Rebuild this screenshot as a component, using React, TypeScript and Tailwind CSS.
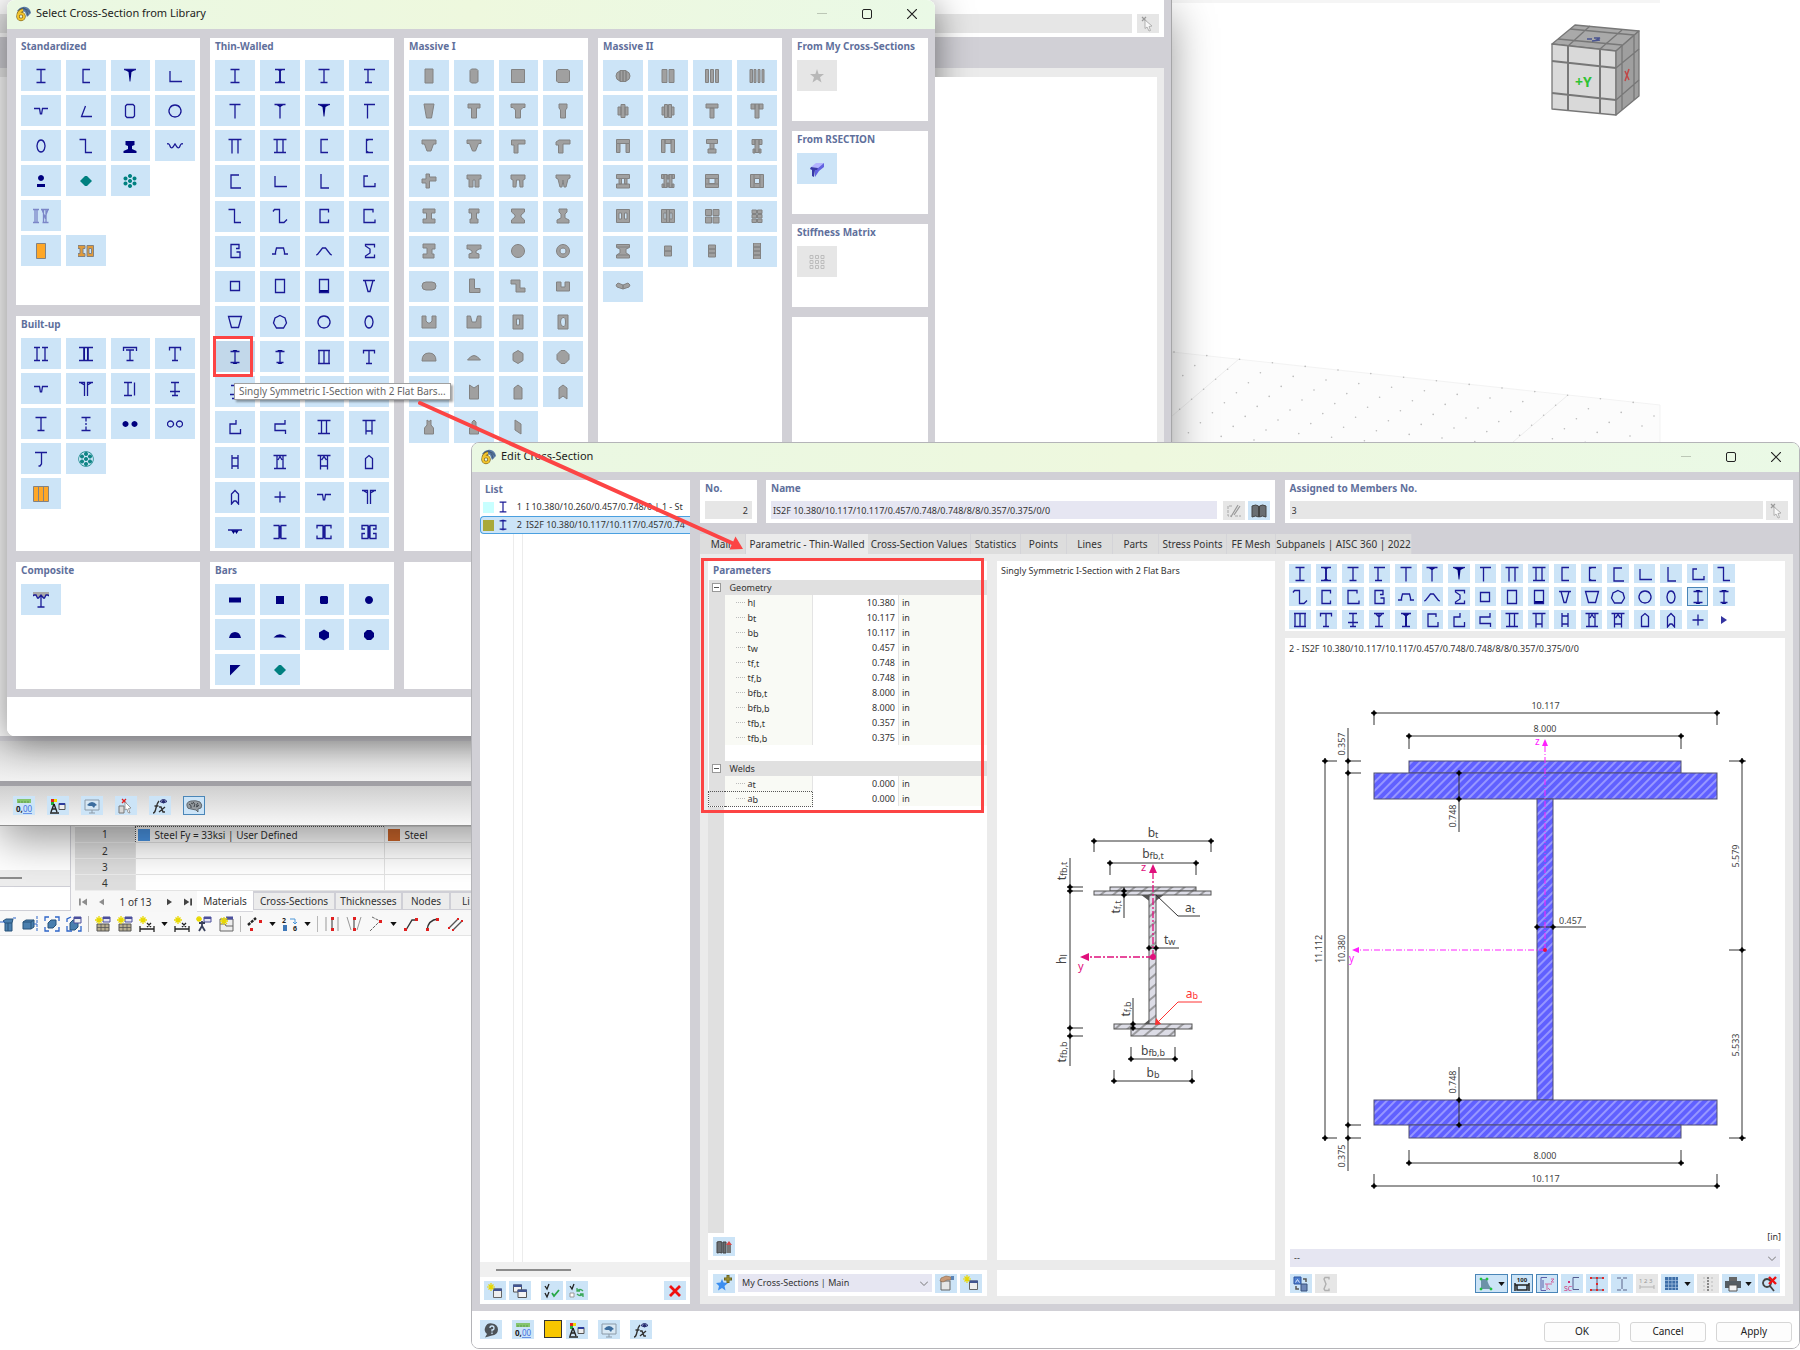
import React from "react";

type Glyph = { s?: string; f?: string; color?: string };

// Thin-walled section glyphs, drawn on a 16x16 box. s = stroked, f = filled.
const T: Record<string, Glyph> = {
	i: { s: "M3.5 1.5h9M3.5 14.5h9M8 1.5v13" },
	iTaper: { s: "M3 1.5h10M3 14.5h10M8 1.5v13", f: "M5 1.5h6L8.8 3v10l2.2 1.5H5L7.2 13V3z" },
	iUnsym: { s: "M2.5 1.5h11M4.5 14.5h7M8 1.5v13" },
	iOffset: { s: "M3 1.5h11M4 14.5h7M7 1.5v13" },
	t: { s: "M2.5 1.5h11M8 1.5v14" },
	tTaper: { s: "M2.5 1.5h11M8 1.5v14", f: "M4 1.5h8L8.5 4h-1z" },
	tThick: { s: "M2 1.5h12", f: "M2 1.5h12L9.5 4 8.4 13.5h-.8L6.5 4z" },
	tOffset: { s: "M3 1.5h11M6.5 1.5v14" },
	pi: { s: "M1.5 1.5h13M5 1.5v14M11 1.5v14" },
	ii: { s: "M1.5 1.5h13M5 1.5v13M11 1.5v13M2 14.5h12" },
	c: { s: "M12 1.5H5v13h7" },
	cTaper: { s: "M12 1.5H5.5v13H12", f: "M5 1.5h4L6 3v10l3 1.5H5z" },
	cUnsym: { s: "M12 2H4v13h10" },
	l: { s: "M3 3v10.5h12" },
	lTall: { s: "M5 1v14h8" },
	lLip: { s: "M7 3H3v10.5h11V10" },
	z: { s: "M1.5 1.5h6v13h6.5" },
	zLip: { s: "M1 3.5l1.5-2h5v13h4.5l3-3" },
	cLip: { s: "M12.5 4.5v-3H4v13h8.5v-3" },
	cLip2: { s: "M12 4.5v-3H3v13h11v-3" },
	beta: { s: "M9 5.5h3v-4H4v13h9V9H9.5" },
	hat: { s: "M0 11h3.5V9l1-4h7l1 4v2H16" },
	curve: { s: "M0 12l1.5-.5L6.5 5h3l5 6.5 1.5.5" },
	sigma: { s: "M13.5 4.5v-3H4.5V3L9 6v4l-4.5 3v1.5h9v-3" },
	sq: { s: "M3.5 3.5h9v9h-9z" },
	box: { s: "M3.5 1.5h9v13h-9z" },
	boxThick: { s: "M3.5 1.5h9v13h-9z", f: "M3.5 12h9v3h-9z" },
	vee: { s: "M2 2.5h12M4 2.5l3 11h2l3-11" },
	trap: { s: "M1.5 2.5h13l-3 11h-7z" },
	hept: { s: "M8 1.5L13 4l1.5 5-3 5h-7l-3-5L3 4z" },
	circ: { s: "M8 2a6 6 0 1 0 .01 0z" },
	ell: { s: "M8 2a4 6 0 1 0 .01 0z" },
	bars: { s: "M3.5 2.5h9M3.5 13.5h9M8 2v12", f: "M5 2.5L6.5 1h3L11 2.5zM5 13.5L6.5 15h3l1.5-1.5z" },
	bars2: { s: "M3.5 2.5h9M4.5 13.5h7M8 2v12", f: "M4.5 3L6 1h4l1.5 2zM5 13l1.5 2h3l1.5-2z" },
	boxI: { s: "M2 1.5h12M2 14.5h12M8 1.5v13M3 1.5v13M13 1.5v13" },
	tLip: { s: "M2.5 4.5v-3h11v3M8 1.5v13M5 14.5h6" },
	dbl: { s: "M4 1.5h8M8 1.5v13M3 10.5h10M5 14.5h6" },
	yI: { s: "M3 1.5h10M4 14.5h8M8 1.5v13M5 2l3 3 3-3" },
	yIThick: { s: "M3 1.5h10M4 14.5h8M8 1.5v13", f: "M4 1.5h8L9 4v10H7V4z" },
	g: { s: "M12 5V2H4v12.5h10V10" },
	gUp: { s: "M9 1v4H3v9.5h10.5V10" },
	s: { s: "M13 1v4H3v6.5h10.5V15" },
	iiTop: { s: "M1.5 1.5h13M5.5 1.5v13M10.5 1.5v13M2 14.5h12" },
	piTop: { s: "M1.5 1.5h13M5 1.5v14M11 1.5v14M5 12h6" },
	hash: { s: "M5 1v14M11 1v14M5 4h6M5 12h6" },
	ladder: { s: "M1.5 1.5h13M2 14.5h12M5 1.5v13M11 1.5v13M6 6l2-3.5L10 6" },
	ladder2: { s: "M1.5 1.5h13M4.5 1.5v14M11.5 1.5v14M5.5 6L8 2.5 10.5 6M4.5 12h7" },
	house: { s: "M4.5 14.5v-10L8 1.5l3.5 3v10z" },
	house2: { s: "M4.5 15V5L8 1.5 11.5 5v10L9 12H7z" },
	plus: { s: "M2.5 8h11M8 2.5v11" },
	wing: { s: "M1 5.5h5.5l1 6M15 5.5H9.5l-1 6" },
	wingTall: { s: "M1 1.5h5.5V15M15 1.5H9.5V15M3 2l3.5 2M13 2L9.5 4" },
	wingLow: { s: "M1 6h14", f: "M4 6h8L9.5 10 8 7.5 6.5 10z" },
	cc: { s: "M1.5 1.5H7v13H1.5M14.5 1.5H9v13h5.5M8 2v12" },
	ccLip: { s: "M1 4.5v-3h6v13H1v-3M15 4.5v-3H9v13h6v-3M8 2v12" },
	ccBeta: { s: "M4 5H1V1.5h6v13H1V9.5h3M12 5h3V1.5H9v13h6V9.5h-3M8 2v12" },
	thick4: { f: "M4 4h8v8H4z" },
	angleS: { s: "M7.5 3L3.5 13.5H14" },
	boxR: { s: "M5 1.5h6L12.5 3v10L11 14.5H5L3.5 13V3z" },
	rail: { f: "M3.5 3h9v4L10 8v3l4.5 2v2h-13v-2L6 11V8L3.5 7z" },
	wave: { s: "M0 6q2-1 3 2t3 1l2-3 2 3q2 2 3-1t3-2" },
	person: { f: "M8 2a3 3 0 1 0 .01 0zM4 11h8v3H4z" },
	roundTeal: { f: "M2 8l3-3 2-2h2l2 2 3 3-3 3-2 2H7l-2-2z", color: "#008080" },
	flower: {
		f: "M8 6a2 2 0 1 0 .01 0zM8 1a2 2 0 1 0 .01 0zM8 11a2 2 0 1 0 .01 0zM3.5 3.5a2 2 0 1 0 .01 0zM12.5 3.5a2 2 0 1 0 .01 0zM3.5 8.5a2 2 0 1 0 .01 0zM12.5 8.5a2 2 0 1 0 .01 0z",
		color: "#008080",
	},
	mixed: { s: "M0 1.5h6M0 14.5h6M2 1.5v13M4 1.5v13M8 1.5h8M9 1.5l3 8 3-8M10.5 1.5v13M13 1.5v13M9.5 14.5h6", color: "#7b86c8" },
	cap: { s: "M1.5 5V1.5h13V5M4 4h8M8 4v11M4.5 14.5h7" },
	iiWide: { s: "M1 1.5h6M1 14.5h6M4 1.5v13M9 1.5h6M9 14.5h6M12 1.5v13" },
	iiClose: { s: "M1 1.5h14M1 14.5h14M6 1.5v13M10 1.5v13", f: "M5.5 1.5H7v13H5.5zM9 1.5h1.5v13H9z" },
	iBar: { s: "M2 1.5h8M2 14.5h8M6 1.5v13M12.5 1.5v13" },
	iGap: { s: "M3.5 1.5h9M3.5 14.5h9M8 1.5v4M8 7v2M8 10.5v4" },
	dots: { f: "M3.5 5a3 3 0 1 0 .01 0zM12.5 5a3 3 0 1 0 .01 0z" },
	rings: { s: "M3.5 5a3 3 0 1 0 .01 0zM12.5 5a3 3 0 1 0 .01 0z" },
	tHook: { s: "M2 1.5h12M8.5 1.5V13L7 15H5.5" },
	comp: { s: "M0 4l1-1h2l1.5 3h1L8 3l2.5 3h1L13 3h2l1 1M8 3v12M4.5 15h7" },
	flat: { f: "M2 5.5h12v5H2z" },
	sqR: { f: "M5 4h6l1 1v6l-1 1H5l-1-1V5z" },
	dot: { f: "M8 4a4 4 0 1 0 .01 0z" },
	half: { f: "M2 11Q3 5 8 5t6 6z" },
	seg: { f: "M1.5 10.5Q8 4 14.5 10.5z" },
	hex: { f: "M8 2.5l5 3v5l-5 3-5-3v-5z" },
	oct: { f: "M6 3h4l3 3v4l-3 3H6l-3-3V6z" },
	tri: { f: "M3 3h10.5L3 13.5z" },
	cable: {
		f: "M8 6a2 2 0 1 0 .01 0zM8 1a2 2 0 1 0 .01 0zM8 11a2 2 0 1 0 .01 0zM4 3.5a2 2 0 1 0 .01 0zM12 3.5a2 2 0 1 0 .01 0zM4 8.5a2 2 0 1 0 .01 0zM12 8.5a2 2 0 1 0 .01 0zM8 .3a7.7 7.7 0 1 0 .01 0zM8 1a7 7 0 1 1-.01 0z",
		color: "#108585",
	},
};

const STANDARDIZED = "i,c,tThick,l,wing,angleS,boxR,circ,ell,z,rail,wave,person,roundTeal,flower,,mixed,,,".split(",");
const BUILT_UP = "iiWide,iiClose,cap,tLip,wing,wingTall,iBar,dbl,iUnsym,iGap,dots,rings,tHook,cable".split(",");
const BARS = "flat,thick4,sqR,dot,half,seg,hex,oct,tri,roundTeal".split(",");
const THIN =
	"i,iTaper,iUnsym,iOffset,t,tTaper,tThick,tOffset,pi,ii,c,cTaper,cUnsym,l,lTall,lLip,z,zLip,cLip,cLip2,beta,hat,curve,sigma,sq,box,boxThick,vee,trap,hept,circ,ell,bars,bars2,boxI,tLip,dbl,yI,yIThick,g,gUp,s,iiTop,piTop,hash,ladder,ladder2,house,house2,plus,wing,wingTall,wingLow,cc,ccLip,ccBeta".split(
		",",
	);
const PALETTE = THIN.slice(0, 50);

const MASSIVE_1 = [
	"M4 1h8v14H4z", "M5.5 1h5L12 2.5v11L10.5 15h-5L4 13.5v-11z", "M1.5 1.5h13v13h-13z", "M3 1.5h10L14.5 3v10L13 14.5H3L1.5 13V3z",
	"M3 1h10l-2.5 14h-5z", "M2 1h12v4h-3.5v10h-5V5H2z", "M1 1h14v3.5h-2L10.5 7v8h-5V7L3 4.5H1z", "M4 1h8v4l-1.5 2v8h-5V7L4 5z",
	"M1 2h14v4h-2.5L10 13H6L3.5 6H1z", "M1 2h14v3.5h-2.5L9.5 13h-3L3.5 5.5H1z", "M1.5 2H15v4H8v9H4V7H1.5z", "M1 4l3-2h11v4H8v9H3.5V7H1z",
	"M5 1h3.5v3H15v4H8.5v7H5v-5H1V6h4z", "M1 2h14v4h-2v8H9V7H7v7H3V6H1z", "M1 2h14v4l-2 1v7h-3L9.5 7h-3L6 14H3V7L1 6z", "M1 2h14v3l-2 1-2 8H9L8 7l-1 7H5L3 6 1 5z",
	"M2 1h12v4h-3.5v6H14v4H2v-4h3.5V5H2z", "M3 1h10v4h-2.5v6H12v4H4v-4h1.5V5H3z", "M1.5 1h13v3L11 7v2l3.5 3v3h-13v-3L5 9V7L1.5 4z", "M4 1h8v3l-2 2v4l4 2v3H2v-3l4-2V6L4 4z",
	"M2 1h12v5h-3v5h2v4H2v-4h4V5H2z", "M1 2h14v4h-2l-3 2v2l3 1v4H3v-4l3-1V8L3 6H1z", "M8 1.5a6.5 6.5 0 1 0 .01 0z", "M8 1.5a6.5 6.5 0 1 0 .01 0zM8 5a3 3 0 1 0 .01 0z",
	"M5 4h6q4 0 4 4t-4 4H5q-4 0-4-4t4-4z", "M3.5 1h5v9.5H14v4H3.5z", "M1 2h9v8h5v4H6V6H1z", "M1.5 4H6v5h4V4h4.5v9h-13z",
	"M1 2h4v5l2 2h2l2-2V2h4v12H1z", "M1 2h3.5L6 8h4l1.5-6H15v12H1z", "M3 1h10v14H3zM6.5 5v6h3V5z", "M3 1h10v14H3zM8 3.5Q5.5 4 5.5 8T8 12.5 10.5 8 8 3.5z",
	"M1 12Q1 4 8 4t7 8z", "M1.5 11Q8 2 14.5 11z", "M8 1.5l5 3v7l-5 3-5-3v-7z", "M6 1.5h4l4 4v5l-4 4H6l-4-4v-5z",
	"M4 1h8v14H4z", "M3.5 1L8 4l4.5-3v14h-9z", "M4 4l4-3 4 3v11H4z", "M4 4l4-3 4 3v11l-4-3-4 3z",
	"M6 1l2 1.5L10 1v5l2.5 3v6h-9V9L6 6z", "M6 3l2-2 2 2v4l2.5 2v6h-9V9L6 7z", "M5 1l6 4v10l-6-4z",
];

const MASSIVE_2 = [
	"M5 3Q1 4 1 8t4 5zM5 2.5h3v11H5zM8 2.5h3v11H8zM11 3q4 1 4 5t-4 5z", "M2 1.5h5v13H2zM9 1.5h5v13H9z", "M1.5 1.5h3v13h-3zM6.5 1.5h3v13h-3zM11.5 1.5h3v13h-3z", "M1 1.5h2.5v13H1zM5 1.5h2v13H5zM9 1.5h2v13H9zM13 1.5h2v13h-2z",
	"M6 1.5h4v13H6zM3 4h3v8H3zM10 4h3v8h-3z", "M4.5 1.5h3v13h-3zM8.5 1.5h3v13h-3zM2 4h2.5v8H2zM11.5 4H14v8h-2.5z", "M2 1h12v4H2zM6 5h4v10H6z", "M6 1h4v14H6zM2 1h4v5H2zM10 1h4v5h-4z",
	"M1.5 1.5h13v4h-13zM1.5 5.5H5v9H1.5zM11 5.5h3.5v9H11z", "M1.5 1.5H5v13H1.5zM11 1.5h3.5v13H11zM5 1.5h6v4H5z", "M2.5 1.5h11v4h-11zM6 5.5h4V11H6zM4 11h8v4H4z", "M6 1.5h4v13H6zM3 1.5h3v5H3zM10 1.5h3v5h-3zM4 11h2v4H4zM10 11h2v4h-2z",
	"M1.5 1.5h13v4h-13zM4 5.5h2.5V11H4zM9.5 5.5H12V11H9.5zM1.5 11h13v4h-13z", "M4 1.5h3v13H4zM9 1.5h3v13H9zM1.5 1.5H4v4H1.5zM12 1.5h2.5v4H12zM2 11h2v3.5H2zM12 11h2v3.5h-2zM7 2h2v4H7zM7 10h2v4H7z", "M1.5 1.5h13v13h-13zM5 5.5v5h6v-5zM1.5 5.5h13M1.5 11h13", "M1.5 1.5h13v13h-13zM5.5 5.5v5h5v-5zM5 1.5v13M11 1.5v13",
	"M1.5 1.5h13v13h-13zM4 5v6h2.5V5zM9.5 5v6H12V5z", "M1.5 1.5h13v13h-13zM4 5v6h2V5zM10 5v6h2V5zM6.5 1.5v13M9.5 1.5v13", "M1.5 1.5h6v6h-6zM9 1.5h6v6H9zM1.5 9h6v6h-6zM9 9h6v6H9z", "M3 2h4.5v3.5H3zM8.5 2H13v3.5H8.5zM3 6.5h4.5V10H3zM8.5 6.5H13V10H8.5zM3 11h4.5v3.5H3zM8.5 11H13v3.5H8.5z",
	"M1.5 1.5h13v3L11 6v4l3.5 2v3h-13v-3L5 10V6L1.5 4.5zM2 4h12M2 12h12", "M4.5 3h7v5h-7zM4.5 8h7v5h-7z", "M4.5 2h7v4h-7zM4.5 6h7v4h-7zM4.5 10h7v4h-7z", "M4.5 0h7v4h-7zM4.5 4h7v4h-7zM4.5 8h7v4h-7zM4.5 12h7v4h-7z",
	"M1 7l2-2 5 2v4L2 9zM15 7l-2-2-5 2v4l6-2z",
];

function SectionIcon({ name }: { name: string }) {
	const g = T[name];
	const color = g.color ?? "#1a1a96";
	return (
		<svg viewBox="0 0 16 16" className="w-4 h-4" aria-hidden="true">
			{g.f && <path d={g.f} fill={g.color ?? "#00007f"} />}
			{g.s && <path d={g.s} fill="none" stroke={color} strokeWidth="1.3" />}
		</svg>
	);
}

function SolidIcon({ d, fill = "#a0a0a0" }: { d: string; fill?: string }) {
	return (
		<svg viewBox="0 0 16 16" className="w-4 h-4" aria-hidden="true">
			<path d={d} fill={fill} fillRule="evenodd" stroke="#828282" strokeWidth="1" />
		</svg>
	);
}

function Tile({ label, children, disabled, hot }: any) {
	let bg = "bg-[#cce4f7]";
	if (disabled) bg = "bg-[#e6e6e6]";
	if (hot) bg = "bg-[#c2d8ea]";
	return (
		<button type="button" aria-label={label} className={`flex items-center justify-center min-h-[31px] ${bg}`}>
			{children}
		</button>
	);
}

function Heading({ children }: any) {
	return <h3 className="text-[10px] leading-[14px] font-bold text-[#5f709c] whitespace-nowrap">{children}</h3>;
}

function LibraryPanel({ title, className = "", rows = "", children }: any) {
	return (
		<section className={`bg-white px-[5px] pt-px pb-[3px] flex flex-col ${className}`}>
			{title && <Heading>{title}</Heading>}
			<div className={`mt-[7px] grid grid-cols-4 gap-x-[5px] gap-y-1 ${rows}`}>{children}</div>
		</section>
	);
}

function SidePanel({ title, children }: any) {
	return (
		<section className="bg-white h-[83px] px-[5px] pt-px">
			<Heading>{title}</Heading>
			<div className="mt-[7px] grid w-10">{children}</div>
		</section>
	);
}

function Logo() {
	return (
		<svg viewBox="0 0 16 16" className="w-4 h-4" aria-hidden="true">
			<path d="M2 5Q6 0 11 1q4 1 5 6l-4 4-2-5-3-1z" fill="#5b7ba6" />
			<path d="M4 3.5q6-3 11 3M8 1.5q5 3 5 8" stroke="#38506f" strokeWidth="0.8" fill="none" />
			<path d="M8 4Q3 5 3 10.5a3 3 0 1 0 6 0 3 3 0 0 0-6 0" fill="none" stroke="#7b6420" strokeWidth="3.4" />
			<path d="M8 4Q3 5 3 10.5a3 3 0 1 0 6 0 3 3 0 0 0-6 0" fill="none" stroke="#f2c42e" strokeWidth="2" />
		</svg>
	);
}

function TitleBar({ title }: { title: string }) {
	return (
		<header className="h-[29px] shrink-0 flex items-center pl-2 pr-[11px] pb-[2px] bg-linear-to-r from-[#eaf8e3] via-[#eef8de] to-[#eaf9e6]">
			<Logo />
			<h2 className="ml-[5px] text-[11px] text-[#1c1c1c]">{title}</h2>
			<div className="ml-auto flex items-center gap-[21px]">
				<button type="button" aria-label="Minimize" className="w-6 h-6 flex items-center justify-center">
					<span className="w-[10px] h-px bg-[#bcc7b6]" />
				</button>
				<button type="button" aria-label="Maximize" className="w-6 h-6 flex items-center justify-center">
					<span className="w-[10px] h-[10px] border border-[#222] rounded-[2px]" />
				</button>
				<button type="button" aria-label="Close" className="w-6 h-6 flex items-center justify-center">
					<svg viewBox="0 0 10 10" className="w-[10px] h-[10px]"><path d="M0 0l10 10M10 0L0 10" stroke="#222" strokeWidth="1.2" /></svg>
				</button>
			</div>
		</header>
	);
}

function LibraryWindow() {
	return (
		<div className="absolute left-[7px] top-0 w-[928px] h-[736px] flex flex-col rounded-lg overflow-hidden bg-white">
			<TitleBar title="Select Cross-Section from Library" />
			<div className="flex-1 min-h-0 flex gap-[10px] bg-[#d1d0d6] pl-[9px] pr-[7px] pt-[9px] pb-2">
				<div className="flex-[184] flex flex-col gap-[11px]">
					<LibraryPanel title="Standardized" className="h-[267px]">
						{STANDARDIZED.map((n, i) => (n ? <Tile key={i} label={n}><SectionIcon name={n} /></Tile> : <span key={i} />))}
						<Tile label="Timber rectangle"><SolidIcon d="M3.5 .5h9v15h-9z" fill="#ffa726" /></Tile>
						<Tile label="Timber built-up"><SolidIcon d="M0 2.5h7v3H5v5h2v3H0v-3h2v-5H0zM9 2.5h6.5v11H9zM11 5.5v5h2.5v-5z" fill="#e09a3a" /></Tile>
					</LibraryPanel>
					<LibraryPanel title="Built-up" className="h-[235px]">
						{BUILT_UP.map((n, i) => <Tile key={i} label={n}><SectionIcon name={n} /></Tile>)}
						<span /><span />
						<Tile label="Timber panel"><SolidIcon d="M.5 .5h15v15H.5zM5.5 .5v15M10.5 .5v15" fill="#ffa726" /></Tile>
					</LibraryPanel>
					<LibraryPanel title="Composite" className="flex-1">
						<Tile label="Composite">
							<svg viewBox="0 0 16 16" className="w-4 h-4">
								<path d="M0 0h16v4l-3-1-2 3-3-3-3 3-2-3-3 1z" fill="#a8a8a8" />
								<path d={T.comp.s} fill="none" stroke="#1a1a96" strokeWidth="1.3" />
							</svg>
						</Tile>
					</LibraryPanel>
				</div>
				<div className="flex-[184] flex flex-col gap-[11px]">
					<LibraryPanel title="Thin-Walled" className="h-[513px]" rows="flex-1 grid-rows-14">
						{THIN.map((n, i) => <Tile key={i} label={n} hot={n === "bars"}><SectionIcon name={n} /></Tile>)}
					</LibraryPanel>
					<LibraryPanel title="Bars" className="flex-1">
						{BARS.map((n, i) => <Tile key={i} label={n}><SectionIcon name={n} /></Tile>)}
					</LibraryPanel>
				</div>
				<div className="flex-[184] flex flex-col gap-[11px]">
					<LibraryPanel title="Massive I" className="h-[513px]" rows="flex-1 grid-rows-14">
						{MASSIVE_1.map((d, i) => <Tile key={i} label={`Massive I ${i + 1}`}><SolidIcon d={d} /></Tile>)}
					</LibraryPanel>
					<LibraryPanel className="flex-1" />
				</div>
				<div className="flex-[184] flex flex-col gap-[11px]">
					<LibraryPanel title="Massive II" className="h-[513px]" rows="flex-1 grid-rows-14">
						{MASSIVE_2.map((d, i) => <Tile key={i} label={`Massive II ${i + 1}`}><SolidIcon d={d} /></Tile>)}
					</LibraryPanel>
					<LibraryPanel className="flex-1" />
				</div>
				<div className="w-[136px] flex flex-col gap-[10px]">
					<SidePanel title="From My Cross-Sections">
						<Tile label="Favorites" disabled>
							<svg viewBox="0 0 16 16" className="w-4 h-4"><path d="M8 1l1.6 5H15l-4 3.3 1.5 5.2L8 11.5l-4.5 3L5 9.3 1 6h5.4z" fill="#b8b8b8" /></svg>
						</Tile>
					</SidePanel>
					<SidePanel title="From RSECTION">
						<Tile label="RSECTION">
							<svg viewBox="0 0 16 16" className="w-4 h-4">
								<path d="M2 6l5-4h8L9 7z" fill="#b4b4ff" />
								<path d="M9 7l6-5v4l-5 4-4 6V9z" fill="#6363e0" />
								<path d="M2 6l7 1-1 2H6l-1 7-2-1V9L1 8z" fill="#3a3aa8" />
							</svg>
						</Tile>
					</SidePanel>
					<SidePanel title="Stiffness Matrix">
						<Tile label="Stiffness matrix" disabled>
							<svg viewBox="0 0 16 16" className="w-4 h-4">
								<path d="M1 1.5h3v3H1zM6.5 1.5h3v3h-3zM12 1.5h3v3h-3zM1 6.5h3v3H1zM6.5 6.5h3v3h-3zM12 6.5h3v3h-3zM1 11.5h3v3H1zM6.5 11.5h3v3h-3zM12 11.5h3v3h-3z" fill="none" stroke="#bdbdbd" />
							</svg>
						</Tile>
					</SidePanel>
					<section className="bg-white flex-1" />
				</div>
			</div>
			<div className="h-[39px] shrink-0 bg-white" />
		</div>
	);
}

/* toolbar glyphs */
const G: Record<string, React.ReactNode> = {
	decimals: <><path d="M1 1h14v4H1z" fill="#86c56e" /><path d="M3 3v2M6 3v2M9 3v2M12 3v2" stroke="#5d9a48" /><text x="0" y="14" fontSize="8" fontWeight="700" fill="#222" fontFamily="Noto Sans">0,</text><text x="7" y="14" fontSize="8" fill="#3d6fe0" fontFamily="Noto Sans">00</text><path d="M7 15.5h9" stroke="#3d6fe0" strokeWidth="0.7" /></>,
	colors: <><path d="M1 1h3v3H1z" fill="#e02020" /><path d="M4 1h3v3H4z" fill="#f2d600" /><path d="M1 4h3v3H1z" fill="#1fb03a" /><path d="M4 6l-3 8M4 6l3 8M2 11h4M0 15h9" stroke="#222" strokeWidth="1.4" /><path d="M9 5.5h6v6H9z" fill="#eee" stroke="#555" /><path d="M9 5h6v2H9z" fill="#2c3c9c" /></>,
	monitor: <><path d="M1 2h14v10H1z" fill="#d8e8f4" stroke="#8b9aa8" /><path d="M3 7q5-6 10 0l-2 1-1 2-2-2-3 0z" fill="#3d6d9e" /><path d="M5 15h6M8 12v3" stroke="#8b9aa8" /></>,
	pickNo: <><path d="M4 1l4 4M8 1L4 5" stroke="#e01f1f" strokeWidth="1.3" /><path d="M1 8h5v7H1z" fill="#d9d9d9" stroke="#777" /><path d="M7 4l6 6-2.5.5L12 15l-2-.5L9 11l-2 1z" fill="#fff" stroke="#888" strokeWidth="0.8" /></>,
	fx: <><path d="M1 15q2 0 3-5t3-7M2.5 8h4M7 9h2l2 5h2M13 9l-6 5" stroke="#333" strokeWidth="1.4" fill="none" /><path d="M8 3.5q3.5-4 7 0-3.5 3-7 0z" fill="#aab0d8" stroke="#23286b" /><path d="M11.5 2a1.5 1.5 0 1 0 .01 0z" fill="#23286b" /></>,
	brain: <><path d="M1 8Q0 4 5 3t9 1q3 3 1 6l-3 1v3l-2-2-5-1Q1 11 1 8z" fill="#959ba0" stroke="#4e555c" strokeWidth="0.8" /><path d="M3 6q3 1 2 4M7 4q3 2 1 5M12 5q-3 2 0 4M5 5l2 1M10 9l3-2" stroke="#3d4348" fill="none" /></>,
	help: <><path d="M9 1.5a6 6 0 0 1 0 12l-7 2L4 12A6 6 0 0 1 9 1.5z" fill="#4d5358" /><path d="M7 6q0-2 2-2t2 2-2 2v1.5M9 10.5V12" stroke="#cce4f7" strokeWidth="1.3" fill="none" /></>,
	newItem: <><path d="M6.5 6h8v8.5h-8z" fill="#eee" stroke="#666" /><path d="M6 5.5h9V8H6z" fill="#41548f" /><path d="M4 0v8M0 4h8M1.5 1.5l5 5M6.5 1.5l-5 5" stroke="#e8d800" strokeWidth="1.2" /></>,
	copyItem: <><path d="M1.5 2h8v7h-8z" fill="#f3f3f3" stroke="#555" /><path d="M1 1.5h9V4H1z" fill="#41548f" /><path d="M6 7h8.5v7.5H6z" fill="#f3f3f3" stroke="#555" /><path d="M5.5 6.5H15V9H5.5z" fill="#41548f" /></>,
	checkAll: <><path d="M1 3l2 3 2-5M1 10l2 4 2-5" stroke="#222" fill="none" strokeWidth="1.3" /><path d="M8 10l2 3 5-6" stroke="#26a845" strokeWidth="1.8" fill="none" /></>,
	checkSwap: <><path d="M1 3l2 3 2-5" stroke="#222" fill="none" strokeWidth="1.3" /><path d="M1 10h4v4H1z" fill="#fff" stroke="#999" /><path d="M8 8q3-3 6 0M14 11q-3 3-6 0M8 5v3h3M14 14v-3h-3" stroke="#3ba85a" strokeWidth="1.3" fill="none" /></>,
	remove: <path d="M3 3l10 10M13 3L3 13" stroke="#f01010" strokeWidth="2.8" />,
	pick: <><path d="M2 1l4 4M6 1L2 5" stroke="#999" strokeWidth="1.2" /><path d="M5 4l7 6-3 .5 1.5 4-1.5.5-2-4-2 1.5z" fill="#f8f8f8" stroke="#aaa" strokeWidth="0.9" /></>,
	edit: <><path d="M6 3H2v10h3M9 13h6" stroke="#a8a8a8" fill="none" strokeDasharray="3 1" /><path d="M12 2L6 12l-1 2M14 3L8 12" stroke="#999" strokeWidth="1.2" /></>,
	book: <path d="M1 3q4-2 6.5 0v11Q5 12 1 14zM8.5 3q3-2 6.5 0v11q-4-2-6.5 0z" fill="#6a6e72" stroke="#444" />,
	bookUp: <><path d="M1 3q3-1 5 0v11q-2-1-5 0zM7 3h3v11H7z" fill="#6a6e72" stroke="#444" /><path d="M11 6h4v8h-4z" fill="#777" /><path d="M10 6l3-4 3 4z" fill="#d94848" /></>,
	star: <><path d="M6 4l1.5 3.5L12 8l-3.5 3 1 4.5L6 13l-4 2.5L3 11 0 8l4.5-.5z" fill="#3b8ef0" /><path d="M12 0v8M8 4h8" stroke="#6b6320" strokeWidth="3" /><path d="M12 1v6M9 4h6" stroke="#a89c33" /></>,
	hand: <><path d="M3 6h9v9H3z" fill="#e6e6e6" stroke="#666" /><path d="M3 3l5-2 5 1v3H9L5 7 2 6z" fill="#c79a78" stroke="#8a6548" strokeWidth="0.6" /><path d="M13 1h3v4h-3z" fill="#5c84b5" /></>,
	transfer: <><path d="M1 1h7v7H1z" fill="#4f7fd0" stroke="#2d55a0" /><path d="M2.5 6.5l2-3 2 3" stroke="#dbe7fa" /><path d="M8 8h6v7H8z" fill="#6d87b8" stroke="#39527f" /><path d="M10 3h3v3M6 13H3v-3" stroke="#555" strokeWidth="1.5" fill="none" /></>,
	sigmaOff: <path d="M11 3.5v-2H7L6 3l2 5-2 5 1 1.5h4v-2" stroke="#b0b0b0" fill="none" strokeWidth="1.4" />,
	shape: <><path d="M3 3h6q1 6 5 10H3z" fill="#6c93a8" /><path d="M2 2h2v2H2zM8 2h2v2H8zM2 12h2v2H2zM12 12h2v2h-2z" fill="#23c43c" stroke="#23c43c" strokeWidth="0.5" /></>,
	dim: <><path d="M1 7v8M15 7v8M1 9h14M3 9v5h10V9" stroke="#222" fill="none" strokeWidth="1.5" /><text x="8" y="6" textAnchor="middle" fontSize="6" fontWeight="700" fill="#222" fontFamily="Noto Sans">100</text></>,
	axes: <><path d="M8 1.5H2v13h5M4 4v8" stroke="#5b5fa8" fill="none" /><path d="M6 8h7M8 8v6M12 3h3l-3 3h3M9 12l2 2" stroke="#d268a0" /></>,
	sc: <><path d="M15 1.5H9v12h6" stroke="#555c90" fill="none" /><path d="M4 5h2v2H4z" fill="#d02f78" /><text x="0" y="15" fontSize="7" fill="#d02f78" fontFamily="Noto Sans">SC</text></>,
	iRed: <><path d="M2 2h12M2 14h12M8 2v12" stroke="#5a5a7a" /><path d="M1 1h2v2H1zM13 1h2v2h-2zM7 1h2v2H7zM7 7h2v2H7zM1 13h2v2H1zM13 13h2v2h-2zM7 13h2v2H7z" fill="#e02828" /></>,
	iThin: <path d="M3 2h4M9 2h4M3 14h4M9 14h4M8 3v10" stroke="#5a6388" />,
	nums: <><text x="0" y="7" fontSize="6" fill="#999" fontFamily="Noto Sans">1 2 3</text><path d="M1 11h14M1 9v4M15 9v4" stroke="#b5b5b5" /></>,
	grid: <><path d="M1 1h13v13H1z" fill="#3d6ea8" /><path d="M4.5 1v13M8 1v13M11.5 1v13M1 4.5h13M1 8h13M1 11.5h13" stroke="#a7c4e2" strokeWidth="0.7" /></>,
	ruler: <><path d="M8 1v14" stroke="#888" strokeDasharray="2 1" strokeWidth="2" /><path d="M3 2h2M3 6h2M3 10h2M3 14h2M11 2h2M11 6h2M11 10h2M11 14h2" stroke="#bbb" /></>,
	print: <><path d="M4 1h8v4H4z" fill="#666" /><path d="M0 5h16v7H0z" fill="#555d63" /><path d="M4 9h8v6H4z" fill="#f2f2f2" stroke="#555" /></>,
	zoomX: <><path d="M6 3a4 4 0 1 0 .01 0zM9 10l4 5" stroke="#444" strokeWidth="1.8" fill="none" /><path d="M8 1l7 7M15 1L8 8" stroke="#ee1111" strokeWidth="2.4" /></>,
	block: <><path d="M3 5l3-2h7l-1 4v8H5V7z" fill="#4a7fae" stroke="#27527a" /><path d="M5 7h7M8 7v8" stroke="#27527a" /><path d="M0 6h5M13 2h3" stroke="#2d64c8" /></>,
	blockSide: <><path d="M1 6l3-2h8v7l-3 2H1z" fill="#4a7fae" stroke="#27527a" /><path d="M1 6h8l3-2M9 6v7" stroke="#27527a" /><path d="M15 0v16M12 8h4" stroke="#2d64c8" strokeDasharray="3 1" /></>,
	blockBox: <><path d="M4 7l3-3h5v5l-3 3H4z" fill="#4a7fae" stroke="#27527a" /><path d="M1 5V1h4M11 1h4v4M15 11v4h-4M5 15H1v-4" stroke="#2d64c8" strokeWidth="1.3" /></>,
	blockWin: <><path d="M4 7l3-3h5v7l-3 3H4z" fill="#4a7fae" stroke="#27527a" /><path d="M8 1h7v6H8z" fill="#eee" stroke="#4b4f9c" /><path d="M8 2h7" stroke="#4b4f9c" strokeWidth="2" /><path d="M1 6V3l4-2M1 10v5h5M12 15h3v-5" stroke="#2d64c8" strokeWidth="1.3" /></>,
	node: <><path d="M3 14L9 4h4" stroke="#333" strokeWidth="1.4" /><path d="M1 12h3v3H1zM12 2h3v3h-3z" fill="#e02020" /></>,
	nodes: <><path d="M1 9l8-7" stroke="#222" strokeWidth="2.4" strokeDasharray="3 1" /><path d="M3 12h3v3H3zM12 4h3v3h-3z" fill="#e02020" /></>,
	star2: <><path d="M2 8h12v7H2z" fill="#b8ae90" stroke="#555" /><path d="M2 11.5h12M6 8v7M10 8v7" stroke="#555" strokeWidth="0.8" /><path d="M8 1h7v5H8z" fill="#e5e5f2" stroke="#4b4f9c" /><path d="M8 2h7" stroke="#4b4f9c" strokeWidth="2" /><path d="M4 0v8M0 4h8M1.5 1.5l5 5M6.5 1.5l-5 5" stroke="#e8d800" strokeWidth="1.3" /></>,
	starWin: <><path d="M2 3h13v12H2z" fill="#ededed" stroke="#666" /><path d="M2 8h5l1 2h7" stroke="#666" /><path d="M8 2h7" stroke="#4b4f9c" strokeWidth="3" /><path d="M6 1v8M2 5h8M3 2l6 6M9 2L3 8" stroke="#e8d800" strokeWidth="1.3" /></>,
	star3: <><path d="M4 0v8M0 4h8M1.5 1.5l5 5M6.5 1.5l-5 5" stroke="#e8d800" strokeWidth="1.3" /><path d="M1 13h14M1 10v6M15 10v6M8 7l4 4M12 7l-4 4" stroke="#222" strokeWidth="1.3" /></>,
	walker: <><path d="M8 1h7v5H8z" fill="#e5e5f2" stroke="#4b4f9c" /><path d="M8 2h7" stroke="#4b4f9c" strokeWidth="2" /><path d="M3 0v6M0 3h6M1 1l4 4M5 1L1 5" stroke="#e8d800" strokeWidth="1.3" /><path d="M6 5v5M3 7h6M6 10l-3 5M6 10l3 5" stroke="#39405c" strokeWidth="1.8" /></>,
	swap26: <><text x="0" y="7" fontSize="7" fontWeight="700" fill="#222" fontFamily="Noto Sans">2</text><path d="M1 9h4v6H1z" fill="#3f78b8" /><path d="M8 3h5v4M11 6l2 2 2-2" stroke="#4c97d8" fill="none" /><text x="11" y="15" fontSize="7" fontWeight="700" fill="#222" fontFamily="Noto Sans">6</text></>,
	vLines: <><path d="M2 1v14M14 1v14" stroke="#999" /><path d="M8 2v12" stroke="#333" /><path d="M7 1h3v3H7zM7 12h3v3H7z" fill="#e02020" /></>,
	vLean: <><path d="M1 1l4 13M15 1l-4 13" stroke="#999" /><path d="M8 2v12" stroke="#333" /><path d="M7 1h3v3H7zM7 12h3v3H7z" fill="#e02020" /></>,
	corner: <><path d="M4 1l8 4L2 15" stroke="#666" fill="none" strokeDasharray="3 1" /><path d="M11 4h3v3h-3z" fill="#e02020" /></>,
	arc: <><path d="M2 14Q3 4 13 3" stroke="#333" fill="none" strokeWidth="1.4" /><path d="M1 12h3v3H1zM11 2h3v3h-3z" fill="#e02020" /></>,
	parallel: <><path d="M2 12L11 3M6 14L15 5" stroke="#555" strokeWidth="1.4" /><path d="M1 11h2v2H1zM10 2h2v2h-2zM5 13h2v2H5zM14 4h2v2h-2z" fill="#e02020" /></>,
};

function Glyph16({ name }: { name: string }) {
	return <svg viewBox="0 0 16 16" className="w-4 h-4 shrink-0 overflow-visible" fill="none" aria-hidden="true">{G[name]}</svg>;
}

function Caret() {
	return <svg viewBox="0 0 8 5" className="w-[7px] h-1 shrink-0" aria-hidden="true"><path d="M0 0h8L4 5z" fill="#111" /></svg>;
}

function ToolButton({ icon, active, disabled, menu }: any) {
	let tone = "bg-[#cce4f7]";
	if (disabled) tone = "bg-[#e6e6e6]";
	if (active) tone = "bg-[#cce4f7] outline outline-1 -outline-offset-1 outline-[#4a86b8]";
	return (
		<button type="button" aria-label={icon} className={`h-[19px] shrink-0 flex items-center justify-center ${menu ? "w-[33px] gap-1" : "w-[22px]"} ${tone}`}>
			<Glyph16 name={icon} />
			{menu && <Caret />}
		</button>
	);
}

function BackDialog() {
	return (
		<div className="absolute left-0 top-0 w-[1172px] h-[826px] flex flex-col bg-[#d1d0d6] border-r border-[#a6a6a8] shadow-[0_14px_40px_rgba(0,0,0,0.4)]">
			<div className="h-[37px] mr-[7px] bg-white flex items-start pt-[14px] pr-[5px] gap-[5px] justify-end">
				<input aria-label="Assigned" readOnly className="flex-1 h-[19px] bg-[#e6e6e6]" />
				<ToolButton icon="pick" disabled />
			</div>
			<div className="mt-[31px] mr-[7px] flex-1 bg-[#ebebeb] pt-[9px] pr-[7px]">
				<div className="h-full bg-white" />
			</div>
			<div className="mt-[5px] h-[40px] shrink-0 bg-linear-to-b from-[#dedede] to-[#f2f2f2]" />
			<div className="h-[5px] shrink-0 bg-[#a2a1a6]" />
			<div className="h-[40px] shrink-0 bg-linear-to-b from-[#cfcfcf] to-[#f7f7f7] border-b border-[#8f8f8f] flex items-center gap-[12px] pl-[13px]">
				<ToolButton icon="decimals" />
				<ToolButton icon="colors" />
				<ToolButton icon="monitor" />
				<ToolButton icon="pickNo" />
				<ToolButton icon="fx" />
				<ToolButton icon="brain" active />
			</div>
		</div>
	);
}

const APP_TOOLS = ["block", "blockSide", "blockBox", "blockWin", "|", "star2", "star2", "star3", "v", "star3", "walker", "starWin", "|", "nodes", "v", "swap26", "v", "|", "vLines", "vLean", "corner", "v", "node", "arc", "parallel"];

function AppTables() {
	return (
		<div className="absolute left-0 top-[826px] w-[480px] text-[10px] leading-[14px] text-[#333] bg-white">
			<div className="flex bg-[#f7f7f7]">
				<div className="w-[71px] shrink-0 h-[85px] border-r border-b border-[#cfcfd6] bg-white flex flex-col">
					<div className="mt-auto h-4 bg-[#ededed] flex items-center">
						<span className="w-[22px] h-[2px] bg-[#8c8c8c]" />
					</div>
					<div className="h-6 border-t border-[#cfcfd6]" />
				</div>
				<div className="ml-1 flex-1 min-w-0">
					<table className="w-full border-collapse bg-white table-fixed">
						<colgroup><col className="w-[60px]" /><col className="w-[249px]" /><col /></colgroup>
						<tbody>
							{[1, 2, 3, 4].map((n) => (
								<tr key={n} className="h-4">
									<th className="bg-[#dedede] border-b border-[#ececec] font-normal text-center p-0">{n}</th>
									<td className={`p-0 ${n === 1 ? "border border-dotted border-[#555]" : "border border-[#e3e3e3]"}`}>
										{n === 1 && <div className="flex items-center gap-[5px] pl-[2px]"><span className="w-3 h-3 bg-[#4b97e8]" />Steel Fy = 33ksi | User Defined</div>}
									</td>
									<td className="p-0 border border-[#e3e3e3]">
										{n === 1 && <div className="flex items-center gap-[5px] pl-[3px]"><span className="w-3 h-3 bg-[#d0682c]" />Steel</div>}
									</td>
								</tr>
							))}
						</tbody>
					</table>
					<div className="flex h-[21px] items-center">
						<nav className="w-[122px] shrink-0 flex items-center justify-between pl-1 pr-[5px]" aria-label="Pages">
							<button type="button" aria-label="First"><svg viewBox="0 0 9 8" className="w-2 h-2"><path d="M0 0h2v8H0zM9 0v8L3 4z" fill="#8d8d8d" /></svg></button>
							<button type="button" aria-label="Previous"><svg viewBox="0 0 6 8" className="w-[5px] h-2"><path d="M6 0v8L0 4z" fill="#8d8d8d" /></svg></button>
							<span className="px-1">1 of 13</span>
							<button type="button" aria-label="Next"><svg viewBox="0 0 6 8" className="w-[5px] h-2"><path d="M0 0v8l6-4z" fill="#444" /></svg></button>
							<button type="button" aria-label="Last"><svg viewBox="0 0 9 8" className="w-2 h-2"><path d="M7 0h2v8H7zM0 0v8l6-4z" fill="#444" /></svg></button>
						</nav>
						<button type="button" className="h-full w-[56px] shrink-0 bg-white border-b border-[#d6d6dc]">Materials</button>
						<button type="button" className="h-[19px] w-[82px] shrink-0 self-start bg-[#ececec] border border-t-2 border-[#cfcfd6] leading-[15px]">Cross-Sections</button>
						<button type="button" className="h-[19px] w-[67px] shrink-0 self-start bg-[#ececec] border border-t-2 border-[#cfcfd6] leading-[15px]">Thicknesses</button>
						<button type="button" className="h-[19px] w-[48px] shrink-0 self-start bg-[#ececec] border border-t-2 border-[#cfcfd6] leading-[15px]">Nodes</button>
						<button type="button" className="h-[19px] flex-1 min-w-0 self-start bg-[#ececec] border border-t-2 border-[#cfcfd6] leading-[15px] text-left pl-[11px]">Li</button>
					</div>
				</div>
			</div>
			<div className="h-[24px] bg-[#f8f8f8] border-b border-[#e4e4e4] flex items-center gap-[6px]">
				{APP_TOOLS.map((t, i) => {
					if (t === "|") return <span key={i} className="w-px h-4 bg-[#b8b8b8] shrink-0" />;
					if (t === "v") return <Caret key={i} />;
					return <button type="button" key={i} aria-label={t}><Glyph16 name={t} /></button>;
				})}
			</div>
		</div>
	);
}

function Workspace3D() {
	const dots: React.ReactNode[] = [];
	for (let i = 0; i < 22; i++) {
		for (let j = 0; j < 11; j++) {
			const x = 1174 + 32.8 * i - 12 * j;
			const y = 352 + 3.6 * i + 10 * j;
			if (x > 1172 && x < 1658 && y < 443) dots.push(<circle key={`${i}-${j}`} cx={x} cy={y} r="0.8" fill="#bbb" />);
		}
	}
	return (
		<svg viewBox="1172 0 628 443" className="absolute left-[1172px] top-0 w-[628px] h-[443px]" aria-label="Model view">
			<path d="M1172 0h488v3h-488z" fill="#f5f5f5" />
			<path d="M1172 352l488 53v38h-488z" fill="#fcfcfc" stroke="#f3f3f3" />
			<path d="M1239 359l-67 57M1568 395l-55 47" stroke="#ededed" />
			{dots}
			<g stroke="#777" strokeWidth="1.3" strokeLinejoin="round">
				<path d="M1552 44l23-19 64 6-23 20z" fill="#a9a9a9" />
				<path d="M1552 44l64 7v64l-64-6z" fill="#d9d9d9" />
				<path d="M1616 51l23-20v65l-23 19z" fill="#9f9f9f" />
				<path d="M1568 46v64M1600 49v65M1552 61l64 7M1552 93l64 7" strokeWidth="2" />
				<path d="M1568 46l22-20M1600 49l22-19M1558 39l64 6M1570 29l64 6M1622 46v64M1634 36v64M1616 68l23-19M1616 100l23-20" />
			</g>
			<text x="1575" y="87" fontSize="14" fontWeight="700" fill="#2fc234" fontFamily="Noto Sans">+Y</text>
			<path d="M1587 39h5M1592 41l8-1M1594 38h6l-6 3" stroke="#4a5490" strokeWidth="1.3" fill="none" />
			<path d="M1625 71l4 9M1629 69l-4 12" stroke="#c04848" strokeWidth="1.5" />
		</svg>
	);
}

// Dimension helpers shared by both section drawings
function Dot({ x, y }: { x: number; y: number }) {
	return (
		<g>
			<path d={`M${x - 3} ${y}h6M${x} ${y - 3}v6`} stroke="#000" strokeWidth="1" />
			<circle cx={x} cy={y} r="2" fill="#000" stroke="none" />
		</g>
	);
}

function HDim({ x1, x2, y, tick, label }: { x1: number; x2: number; y: number; tick: number; label?: string }) {
	return (
		<g stroke="#333" strokeWidth="1">
			<path d={`M${x1 - 3} ${y}H${x2 + 3}M${x1} ${y}v${tick}M${x2} ${y}v${tick}`} />
			<Dot x={x1} y={y} />
			<Dot x={x2} y={y} />
			{label && <text x={(x1 + x2) / 2} y={y - 4} textAnchor="middle" stroke="none" fill="#444" fontSize="9">{label}</text>}
		</g>
	);
}

function VText({ x, y, children, size = 9 }: any) {
	return <text x={x} y={y} transform={`rotate(-90 ${x} ${y})`} textAnchor="middle" stroke="none" fill="#444" fontSize={size}>{children}</text>;
}

function SectionDrawing() {
	return (
		<svg viewBox="1285 662 500 560" className="w-full h-auto" fontFamily="Noto Sans, sans-serif" aria-label="Cross-section drawing">
			<defs>
				<pattern id="hatch" width="6" height="6" patternUnits="userSpaceOnUse" patternTransform="rotate(45)">
					<rect width="6" height="6" fill="#6060ff" />
					<path d="M1 0v6" stroke="#b4b4ff" strokeWidth="1.3" />
				</pattern>
			</defs>
			<g fill="url(#hatch)" stroke="#505070" strokeWidth="1">
				<rect x="1409" y="761" width="272" height="12" />
				<rect x="1374" y="773" width="343" height="26" />
				<rect x="1537" y="799" width="16" height="301" />
				<rect x="1374" y="1100" width="343" height="25" />
				<rect x="1409" y="1125" width="272" height="13" />
			</g>
			<HDim x1={1374} x2={1717} y={713} tick={12} label="10.117" />
			<HDim x1={1409} x2={1681} y={736} tick={13} label="8.000" />
			<HDim x1={1409} x2={1681} y={1163} tick={-13} label="8.000" />
			<HDim x1={1374} x2={1717} y={1186} tick={-12} label="10.117" />
			<g stroke="#333" strokeWidth="1">
				<path d="M1325 758v383M1322 761h15M1322 1138h15M1348 728v443M1345 761h16M1345 773h16M1345 1125h16M1345 1138h16" />
				<path d="M1459 773v59M1459 1067v58M1535 927h51M1742 758v383M1729 761h17M1729 950h17M1729 1138h17" />
			</g>
			{[[1325, 761], [1325, 1138], [1348, 761], [1348, 773], [1348, 1125], [1348, 1138], [1459, 773], [1459, 799], [1459, 1100], [1459, 1125], [1537, 927], [1553, 927], [1742, 761], [1742, 950], [1742, 1138]].map(([x, y]) => (
				<Dot key={`${x}-${y}`} x={x} y={y} />
			))}
			<VText x={1345} y={744}>0.357</VText>
			<VText x={1345} y={1156}>0.375</VText>
			<VText x={1322} y={949}>11.112</VText>
			<VText x={1345} y={949}>10.380</VText>
			<VText x={1456} y={816}>0.748</VText>
			<VText x={1456} y={1082}>0.748</VText>
			<VText x={1739} y={856}>5.579</VText>
			<VText x={1739} y={1045}>5.533</VText>
			<text x="1559" y="924" fontSize="9" fill="#444">0.457</text>
			<g stroke="#ff20ff" strokeWidth="1">
				<path d="M1545 950V745M1545 950H1358" strokeDasharray="6 2 1 2" />
				<path d="M1542 746l3-7 3 7z" fill="#ff20ff" stroke="none" />
				<path d="M1359 947l-7 3 7 3z" fill="#ff20ff" stroke="none" />
			</g>
			<circle cx="1545" cy="950" r="2" fill="#e8103c" />
			<text x="1535" y="745" fontSize="10" fill="#ff20ff">z</text>
			<text x="1349" y="962" fontSize="10" fill="#ff20ff">y</text>
		</svg>
	);
}

function Sub({ base, sub }: { base: string; sub: string }) {
	return <>{base}<tspan fontSize="9" dy="1">{sub}</tspan></>;
}

function SchemeDrawing() {
	return (
		<svg viewBox="997 590 278 670" className="w-full h-auto" fontFamily="Noto Sans, sans-serif" fontSize="12" fill="#444" aria-label="Parameter scheme">
			<defs>
				<pattern id="grayHatch" width="8" height="8" patternUnits="userSpaceOnUse" patternTransform="rotate(50)">
					<rect width="8" height="8" fill="#dcdce6" />
					<path d="M1 0v8" stroke="#777" strokeWidth="1.3" />
				</pattern>
			</defs>
			<path d="M1140 894h12v9zM1165 894h-12v9zM1144 1024l7-6v6zM1161 1024l-6-6v6z" fill="#555" />
			<g fill="url(#grayHatch)" stroke="#555" strokeWidth="1">
				<rect x="1110" y="887" width="86" height="4" />
				<rect x="1094" y="891" width="117" height="4" />
				<rect x="1149" y="895" width="7" height="129" />
				<rect x="1114" y="1024" width="78" height="5" />
				<rect x="1131" y="1029" width="44" height="7" />
			</g>
			<HDim x1={1094} x2={1211} y={841} tick={11} />
			<HDim x1={1110} x2={1196} y={863} tick={12} />
			<HDim x1={1131} x2={1175} y={1059} tick={-12} />
			<HDim x1={1114} x2={1192} y={1081} tick={-11} />
			<g stroke="#333" fill="none">
				<path d="M1070 858v208M1067 887h16M1067 891h16M1067 1028h16M1067 1036h16M1124 887v31M1133 998v31M1147 948h32M1156 895l22 21h22" />
				<path d="M1156 1024l22-22h24" stroke="#f33" />
			</g>
			<path d="M1155 1025l6-1-5-6z" fill="#f33" />
			{[[1070, 887], [1070, 891], [1070, 1028], [1070, 1036], [1124, 891], [1124, 895], [1133, 1024], [1133, 1028], [1149, 948], [1156, 948]].map(([x, y]) => (
				<Dot key={`${x}-${y}`} x={x} y={y} />
			))}
			<g stroke="#e0107c" strokeWidth="1.3">
				<path d="M1153 957V872M1153 957h-66" strokeDasharray="7 2 2 2" />
				<path d="M1149 873l4-9 4 9zM1089 953l-9 4 9 4z" fill="#e0107c" stroke="none" />
			</g>
			<circle cx="1153" cy="957" r="3" fill="#e0107c" />
			<text x="1141" y="871" fontSize="11" fill="#e0107c">z</text>
			<text x="1078" y="970" fontSize="11" fill="#e0107c">y</text>
			<text x="1153" y="837" textAnchor="middle"><Sub base="b" sub="t" /></text>
			<text x="1153" y="858" textAnchor="middle"><Sub base="b" sub="fb,t" /></text>
			<text x="1153" y="1055" textAnchor="middle"><Sub base="b" sub="fb,b" /></text>
			<text x="1153" y="1077" textAnchor="middle"><Sub base="b" sub="b" /></text>
			<text x="1190" y="912" textAnchor="middle"><Sub base="a" sub="t" /></text>
			<text x="1192" y="998" textAnchor="middle" fill="#f33"><Sub base="a" sub="b" /></text>
			<text x="1164" y="944"><Sub base="t" sub="w" /></text>
			<VText x={1066} y={871} size={12}><Sub base="t" sub="fb,t" /></VText>
			<VText x={1066} y={1052} size={12}><Sub base="t" sub="fb,b" /></VText>
			<VText x={1066} y={959} size={12}><Sub base="h" sub="l" /></VText>
			<VText x={1120} y={907} size={12}><Sub base="t" sub="f,t" /></VText>
			<VText x={1130} y={1009} size={12}><Sub base="t" sub="f,b" /></VText>
		</svg>
	);
}

const GEOMETRY = [
	["h", "l", "10.380"],
	["b", "t", "10.117"],
	["b", "b", "10.117"],
	["t", "w", "0.457"],
	["t", "f,t", "0.748"],
	["t", "f,b", "0.748"],
	["b", "fb,t", "8.000"],
	["b", "fb,b", "8.000"],
	["t", "fb,t", "0.357"],
	["t", "fb,b", "0.375"],
];
const WELDS = [
	["a", "t", "0.000"],
	["a", "b", "0.000"],
];

function GroupRow({ title }: { title: string }) {
	return (
		<tr className="h-[15px] bg-[#e0e0e0]">
			<td className="p-0">
				<button type="button" aria-label={`Collapse ${title}`} className="mx-[3px] w-[9px] h-[9px] border border-[#999] bg-white flex items-center justify-center">
					<span className="w-[5px] h-px bg-[#555]" />
				</button>
			</td>
			<th colSpan={3} className="p-0 pl-[5px] text-left font-normal">{title}</th>
		</tr>
	);
}

function ParamRow({ row, focused }: any) {
	return (
		<tr className="h-[15px]">
			<td className={`p-0 bg-[#e0e0e0] ${focused ? "border border-r-0 border-dotted border-[#555]" : ""}`} />
			<th className={`p-0 text-left font-normal bg-[#f9faf5] ${focused ? "border border-l-0 border-dotted border-[#555]" : "border-r border-[#e4e4e4]"}`}>
				<div className="flex items-center pl-[11px]">
					<span className="w-[9px] mr-[3px] border-t border-dotted border-[#bbb]" />
					<span>{row[0]}<span className="relative top-px">{row[1]}</span></span>
				</div>
			</th>
			<td className="p-0 pr-[3px] text-right border-r border-[#e4e4e4]">{row[2]}</td>
			<td className="p-0 pl-[3px] bg-[#f9faf5]">in</td>
		</tr>
	);
}

function ParametersPanel() {
	return (
		<section className="flex-1 bg-white flex flex-col">
			<div className="pl-[5px] pt-[2px] pb-[3px]"><Heading>Parameters</Heading></div>
			<table className="w-full table-fixed border-collapse text-[9px] leading-[13px] text-[#333]">
				<colgroup><col className="w-4" /><col className="w-[88px]" /><col className="w-[86px]" /><col /></colgroup>
				<tbody>
					<GroupRow title="Geometry" />
					{GEOMETRY.map((r) => <ParamRow key={r[0] + r[1]} row={r} />)}
					<tr className="h-4"><td className="bg-[#e0e0e0]" /></tr>
					<GroupRow title="Welds" />
					<ParamRow row={WELDS[0]} />
					<ParamRow row={WELDS[1]} focused />
				</tbody>
			</table>
			<div className="w-4 flex-1 bg-[#e0e0e0]" />
			<div className="pl-[5px] py-1"><ToolButton icon="bookUp" /></div>
		</section>
	);
}

function ListPanel() {
	return (
		<section className="w-[210px] shrink-0 bg-white flex flex-col overflow-hidden">
			<div className="px-[5px] pt-[2px] pb-[2px]"><Heading>List</Heading></div>
			<ul className="flex-1 text-[9px] whitespace-nowrap text-[#333] flex flex-col">
				<li className="h-[18px] shrink-0 flex items-center pl-[3px]">
					<span className="w-[11px] h-[11px] bg-[#c8ffff]" />
					<span className="w-[17px] flex justify-center"><svg viewBox="0 0 16 16" className="w-3 h-3"><path d={T.i.s} stroke="#1a1a96" strokeWidth="1.6" /></svg></span>
					<span className="w-[11px] text-right mr-1">1</span>I 10.380/10.260/0.457/0.748/0 | 1 - St
				</li>
				<li className="h-[18px] shrink-0 flex items-center pl-[2px] bg-[#cce4f7] border border-[#4aa0e0] border-r-0 rounded-l-sm">
					<span className="w-[11px] h-[11px] bg-[#a9a93a]" />
					<span className="w-[17px] flex justify-center"><svg viewBox="0 0 16 16" className="w-3 h-3"><path d={T.bars.s} stroke="#1a1a96" strokeWidth="1.6" /><path d={T.bars.f} fill="#1a1a96" /></svg></span>
					<span className="w-[11px] text-right mr-1">2</span>IS2F 10.380/10.117/10.117/0.457/0.74
				</li>
				<li className="flex-1 ml-[33px] w-[10px] border-x border-[#ececec]" aria-hidden="true" />
			</ul>
			<div className="h-[15px] bg-[#f0f0f0] flex items-center pl-4"><span className="w-[75px] h-[2px] bg-[#8c8c8c]" /></div>
			<div className="h-[27px] flex items-center px-1 gap-[3px]">
				<ToolButton icon="newItem" />
				<ToolButton icon="copyItem" />
				<span className="w-1" />
				<ToolButton icon="checkAll" />
				<ToolButton icon="checkSwap" />
				<span className="flex-1" />
				<ToolButton icon="remove" />
			</div>
		</section>
	);
}

function Field({ label, value, className, align = "", tone = "bg-[#e6e6e6]", id, children }: any) {
	return (
		<div className={`h-[43px] bg-white px-[5px] pt-px ${className}`}>
			<label htmlFor={id} className="block text-[10px] leading-[14px] font-bold text-[#5f709c]">{label}</label>
			<div className="mt-[6px] flex gap-[3px]">
				<input id={id} readOnly defaultValue={value} className={`flex-1 min-w-0 h-[18px] px-[2px] text-[9px] text-[#333] ${tone} ${align}`} />
				{children}
			</div>
		</div>
	);
}

function Combo({ label, value, className }: any) {
	return (
		<div className={`relative ${className}`}>
			<select aria-label={label} className="block w-full h-[18px] appearance-none bg-[#e6e6f2] pl-1 text-[9px] text-[#333] rounded-none">
				<option>{value}</option>
			</select>
			<svg viewBox="0 0 8 5" className="absolute right-1 top-[7px] w-2 h-[5px] pointer-events-none"><path d="M0 .5l4 4 4-4" fill="none" stroke="#777" /></svg>
		</div>
	);
}

const TABS = [
	["Main", "w-[46px]"],
	["Parametric - Thin-Walled", "w-[122px]"],
	["Cross-Section Values", "w-[103px]"],
	["Statistics", "w-[50px]"],
	["Points", "w-[46px]"],
	["Lines", "w-[46px]"],
	["Parts", "w-[46px]"],
	["Stress Points", "w-[68px]"],
	["FE Mesh", "w-[49px]"],
	["Subpanels | AISC 360 | 2022", "w-[136px]"],
];

function EditWindow() {
	return (
		<div className="absolute left-[471px] right-0 top-[442px] bottom-[1px] flex flex-col rounded-lg overflow-hidden bg-white border border-[#b4b4b8]">
			<TitleBar title="Edit Cross-Section" />
			<div className="flex-1 min-h-0 bg-[#d1d0d6] flex gap-[10px] pl-2 pr-[6px] pt-2 pb-[7px]">
				<ListPanel />
				<div className="flex-1 min-w-0 flex flex-col">
					<div className="flex">
						<Field id="no" label="No." value="2" align="text-right pr-1" className="w-[57px] mr-[9px]" />
						<Field id="name" label="Name" value="IS2F 10.380/10.117/10.117/0.457/0.748/0.748/8/8/0.357/0.375/0/0" tone="bg-[#e6e6f2]" className="flex-1 mr-[10px]">
							<span />
							<ToolButton icon="edit" disabled />
							<ToolButton icon="book" />
						</Field>
						<Field id="members" label="Assigned to Members No." value="3" className="flex-1">
							<ToolButton icon="pick" disabled />
						</Field>
					</div>
					<div role="tablist" className="mt-[11px] h-5 flex text-[10px] text-[#333] whitespace-nowrap">
						{TABS.map(([name, width], i) => (
							<button key={name} type="button" role="tab" aria-selected={i === 1} className={`${width} shrink-0 ${i === 1 ? "bg-[#ebebeb]" : "bg-[#dddddd] border-r border-[#d4d4d8]"}`}>
								{name}
							</button>
						))}
					</div>
					<div className="flex-1 min-h-0 bg-[#ebebeb] p-2 pt-[7px] flex gap-[10px]">
						<div className="flex-[279] min-w-0 flex flex-col gap-[10px]">
							<ParametersPanel />
							<div className="h-[26px] bg-white flex items-center gap-[3px] px-[5px]">
								<ToolButton icon="star" />
								<Combo label="Favorites list" value="My Cross-Sections | Main" className="flex-1" />
								<ToolButton icon="hand" />
								<ToolButton icon="newItem" />
							</div>
						</div>
						<div className="flex-[278] min-w-0 flex flex-col gap-[10px]">
							<section className="flex-1 bg-white">
								<p className="pl-1 pt-[3px] text-[9px] leading-[13px] h-[29px] text-[#333]">Singly Symmetric I-Section with 2 Flat Bars</p>
								<SchemeDrawing />
							</section>
							<div className="h-[26px] bg-white" />
						</div>
						<div className="flex-[500] min-w-0 flex flex-col gap-[7px]">
							<div className="h-[70px] bg-white pl-1 pt-[3px]">
								<div className="grid grid-cols-17 gap-x-[5px] gap-y-1 w-[446px]">
									{PALETTE.map((n) => (
										<button key={n} type="button" aria-label={n} className={`h-[19px] flex items-center justify-center bg-[#cce4f7] ${n === "bars" ? "outline outline-1 -outline-offset-1 outline-[#4a86b8]" : ""}`}>
											<SectionIcon name={n} />
										</button>
									))}
									<button type="button" aria-label="More" className="h-[19px] flex items-center justify-center">
										<svg viewBox="0 0 6 8" className="w-[6px] h-2"><path d="M0 0v8l6-4z" fill="#3434a0" /></svg>
									</button>
								</div>
							</div>
							<section className="flex-1 bg-white flex flex-col">
								<p className="pl-1 pt-1 text-[9px] leading-[13px] h-6 text-[#333]">2 - IS2F 10.380/10.117/10.117/0.457/0.748/0.748/8/8/0.357/0.375/0/0</p>
								<SectionDrawing />
								<p className="mt-auto pr-1 text-right text-[9px] leading-[13px] text-[#333]">[in]</p>
								<Combo label="Result" value="--" className="mx-[5px] mt-[6px]" />
								<div className="mt-[7px] mb-[3px] px-[5px] flex gap-[3px]">
									<ToolButton icon="transfer" />
									<ToolButton icon="sigmaOff" disabled />
									<span className="flex-1" />
									<ToolButton icon="shape" active menu />
									<ToolButton icon="dim" active />
									<ToolButton icon="axes" active />
									<ToolButton icon="sc" />
									<ToolButton icon="iRed" />
									<ToolButton icon="iThin" />
									<ToolButton icon="nums" disabled />
									<ToolButton icon="grid" menu />
									<ToolButton icon="ruler" disabled />
									<ToolButton icon="print" menu />
									<ToolButton icon="zoomX" />
								</div>
							</section>
						</div>
					</div>
				</div>
			</div>
			<footer className="h-[37px] shrink-0 bg-white flex items-center pl-2 pr-[7px] gap-[10px]">
				<ToolButton icon="help" />
				<ToolButton icon="decimals" />
				<div className="flex gap-1">
					<button type="button" aria-label="Color" className="w-[18px] h-[18px] bg-[#f7c600] border border-[#333]" />
					<ToolButton icon="colors" />
				</div>
				<ToolButton icon="monitor" />
				<ToolButton icon="fx" />
				<div className="ml-auto pt-1 flex gap-[10px]">
					{["OK", "Cancel", "Apply"].map((b) => (
						<button key={b} type="button" className="w-[76px] h-5 text-[10px] text-[#222] bg-[#fdfdfd] border border-[#d6d6d6] rounded-[3px]">{b}</button>
					))}
				</div>
			</footer>
		</div>
	);
}

// Call-outs drawn over the windows
function Annotations() {
	return (
		<>
			<div className="absolute left-[234px] top-[383px] h-[17px] px-1 bg-white border border-[#a0a0a0] shadow-[2px_2px_2px_rgba(0,0,0,0.35)] text-[10px] leading-[15px] text-[#666] whitespace-nowrap">
				Singly Symmetric I-Section with 2 Flat Bars...
			</div>
			<div className="absolute left-[213px] top-[336px] w-10 h-[41px] border-[3px] border-[#fc4444]" />
			<div className="absolute left-[701px] top-[558px] w-[283px] h-[255px] border-[3px] border-[#fc4444]" />
			<svg viewBox="410 395 345 165" className="absolute left-[410px] top-[395px] w-[345px] h-[165px] pointer-events-none" aria-hidden="true">
				<path d="M420 403L732 543" stroke="#fc4444" strokeWidth="4" strokeLinecap="round" />
				<path d="M743 549l-13.5.5 6-13z" fill="#fc4444" />
			</svg>
		</>
	);
}

export default function App() {
	return (
		<main className="relative min-h-screen overflow-hidden bg-white font-['Noto_Sans',sans-serif]">
			<Workspace3D />
			<AppTables />
			<BackDialog />
			<div className="absolute left-[7px] top-0 w-[928px] h-[736px] rounded-lg shadow-[0_6px_36px_rgba(0,0,0,0.5)]" />
			<div className="absolute left-[935px] top-[77px] w-[222px] h-[370px] bg-white" />
			<LibraryWindow />
			<EditWindow />
			<Annotations />
		</main>
	);
}
